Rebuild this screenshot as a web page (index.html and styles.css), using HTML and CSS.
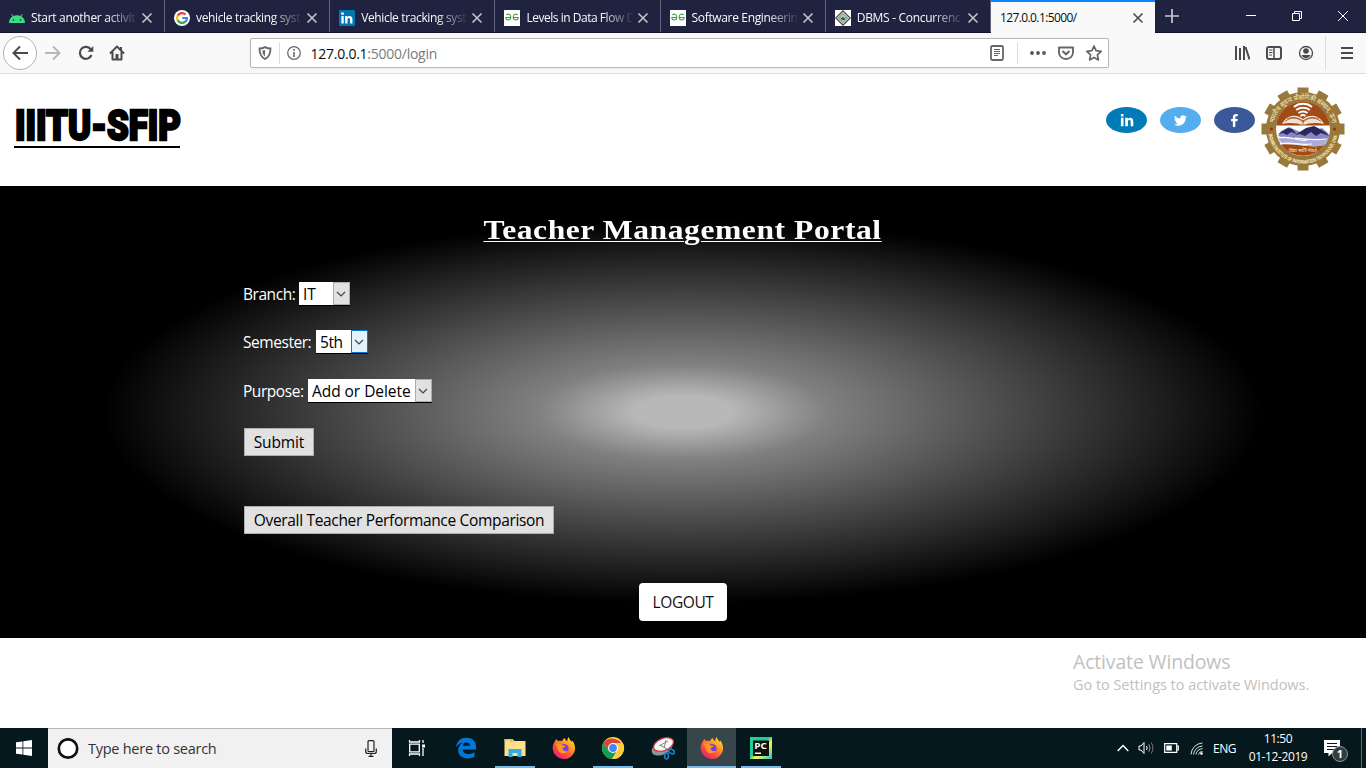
FILE: index.html
```html
<!DOCTYPE html>
<html lang="en">
<head>
<meta charset="utf-8">
<title>127.0.0.1:5000/</title>
<link rel="stylesheet" href="styles.css">
</head>
<body>
<svg class="defs" width="0" height="0">
  <defs>
    <linearGradient id="flame" x1="1" y1="0" x2="0.2" y2="1"><stop offset="0" stop-color="#fff44f"/><stop offset=".35" stop-color="#ffa41f"/><stop offset=".7" stop-color="#ff4a3c"/><stop offset="1" stop-color="#e31587"/></linearGradient>
    <linearGradient id="pc" x1="0" y1="0" x2="1" y2="1"><stop offset="0" stop-color="#21d789"/><stop offset=".45" stop-color="#21c8a0"/><stop offset=".6" stop-color="#fcf84a"/><stop offset="1" stop-color="#19c5e0"/></linearGradient>
    <symbol id="firefox" viewBox="0 0 24 24">
      <path fill="url(#flame)" d="M3 5c.6-1 1-1.600 1.700-2 .2 1 .8 1.600 1.600 2 1.200-.2 2.500-.2 3.700.2.5-1.700 1.600-2.700 3-3.200-.1 1.500 1 2.300 2.200 3.200.4-1.700.4-2.800 1.200-4.200 1 2 2.300 3.500 3.400 5 .2-.5.2-1 .5-1.500 2.300 3 3.200 6 2.600 10A11.300 11.300 0 0 1 .7 13C.5 10 1.300 7.500 3 5z"/>
      <circle cx="12" cy="12.500" r="4.600" fill="#7a3fe0"/>
      <path fill="#ff9a1e" d="M3.500 8c3-1 5.500 0 7 1.500l3 .2c-.3 1.500-1.600 2-3 2.300 0 2.500 2.500 4 5.500 2.800-2 3.500-8 3.500-10-.8-.8-2-.5-4-2.500-6z"/>
    </symbol>
    <symbol id="close" viewBox="0 0 12 12"><path d="M1.500 1.500l9 9m0-9l-9 9" fill="none" stroke="currentColor" stroke-width="1.600"/></symbol>
    <symbol id="gfg" viewBox="0 0 16 16"><rect width="16" height="16" fill="#fff"/><path d="M2.300 4.800C5 3.200 6.800 4.500 6.800 7S5.800 10 4.300 10 1.800 9 1.800 7.500h5M13.700 4.800C11 3.200 9.200 4.500 9.200 7s1 3 2.500 3 2.500-1 2.500-2.500h-5" fill="none" stroke="#43a047" stroke-width="1.100"/></symbol>
    <symbol id="chev" viewBox="0 0 10 6"><path d="M1 1l4 4 4-4" fill="none" stroke="currentColor" stroke-width="1.200"/></symbol>
  </defs>
</svg>

<header class="tabs">
  <div class="tab"><svg class="fav" viewBox="0 0 16 16"><path fill="#3ddc84" d="M0 13a8 8 0 0 1 3.500-6.500L2.200 4.300l.7-.4L4.300 6.100a9 9 0 0 1 7.400 0l1.400-2.200.7.400-1.300 2.200A8 8 0 0 1 16 13z"/><circle cx="4.500" cy="10" r=".8" fill="#20233f"/><circle cx="11.500" cy="10" r=".8" fill="#20233f"/></svg><span class="t t1">Start another activit</span><svg class="x"><use href="#close"/></svg></div>
  <div class="tab"><svg class="fav" viewBox="0 0 16 16"><circle cx="8" cy="8" r="8" fill="#fff"/><g fill="none" stroke-width="2.200"><path stroke="#ea4335" d="M11.500 4.500A5 5 0 0 0 3.600 5.700"/><path stroke="#fbbc05" d="M3.700 5.500a5 5 0 0 0 0 5"/><path stroke="#34a853" d="M3.600 10.300a5 5 0 0 0 7.700 1.400"/><path stroke="#4285f4" d="M11.200 11.800A5 5 0 0 0 13 8H8.200"/></g></svg><span class="t t2">vehicle tracking syst</span><svg class="x"><use href="#close"/></svg></div>
  <div class="tab"><svg class="fav" viewBox="0 0 16 16"><rect width="16" height="16" rx="1" fill="#0077b5"/><path fill="#fff" d="M2.400 6h2.300v7.500H2.400zM2.200 2.500h2.600v2.300H2.200zM6.200 6h2.200v1c1.200-1.800 5-1.600 5 2v4.500h-2.300v-4c0-2.200-2.600-2-2.600 0v4H6.200z"/></svg><span class="t t3">Vehicle tracking syst</span><svg class="x"><use href="#close"/></svg></div>
  <div class="tab"><svg class="fav"><use href="#gfg"/></svg><span class="t t4">Levels in Data Flow D</span><svg class="x"><use href="#close"/></svg></div>
  <div class="tab"><svg class="fav"><use href="#gfg"/></svg><span class="t t5">Software Engineerin</span><svg class="x"><use href="#close"/></svg></div>
  <div class="tab"><svg class="fav" viewBox="0 0 16 16"><rect width="16" height="16" fill="#fff"/><path d="M8 .8L15.200 8 8 15.200.8 8z" fill="#dde3dd" stroke="#444" stroke-width="1.200"/><path d="M8 3.500L12.500 8 8 12.500 3.500 8z" fill="#b9d1bf" stroke="#555" stroke-width=".7"/><path d="M5 6.500l1.500 3.500h3L11 6.500l-1.500 1.800L8 6.500 6.500 8.300z" fill="#286a42"/></svg><span class="t t6">DBMS - Concurrenc</span><svg class="x"><use href="#close"/></svg></div>
  <div class="tab active"><span class="t t7">127.0.0.1:5000/</span><svg class="x"><use href="#close"/></svg></div>
  <svg class="plus" viewBox="0 0 14 14"><path d="M7 0v14M0 7h14" stroke="#c9c9d2" stroke-width="1.700"/></svg>
  <div class="winctl">
    <svg width="12" height="12" viewBox="0 0 12 12"><path d="M1 5.500h10" stroke="#fff"/></svg>
    <svg width="12" height="12" viewBox="0 0 12 12" fill="none" stroke="#fff"><path d="M1.500 3.500h7v7h-7zM3.500 3.500v-2h7v7h-2"/></svg>
    <svg width="12" height="12" viewBox="0 0 12 12" fill="none" stroke="#fff"><path d="M1 1l10 10M11 1L1 11"/></svg>
  </div>
</header>

<nav class="toolbar">
  <div class="navbtns">
    <span class="back"><svg width="18" height="16" viewBox="0 0 18 16" fill="none" stroke="#4a4a4f" stroke-width="2"><path d="M9 1.500L2.500 8 9 14.500M2.500 8H17"/></svg></span>
    <svg width="18" height="16" viewBox="0 0 18 16" fill="none" stroke="#b8b8ba" stroke-width="2"><path d="M9 1.500L15.500 8 9 14.500M15.500 8H1"/></svg>
    <svg width="16" height="16" viewBox="0 0 16 16" fill="none" stroke="#4a4a4f" stroke-width="2.200"><path d="M13.500 10A6 6 0 1 1 13 4.600"/><path d="M9.500 6.800h5.800V1z" fill="#4a4a4f" stroke="none"/></svg>
    <svg width="16" height="16" viewBox="0 0 16 16"><path d="M1 8.500L8 1.500l7 7M3.500 7v7.500h9V7" fill="none" stroke="#4a4a4f" stroke-width="2" stroke-linejoin="round"/><path d="M6.500 9h3v5h-3z" fill="#4a4a4f"/><path d="M11 2h2v3h-2z" fill="#4a4a4f"/></svg>
  </div>
  <div class="urlbar">
    <svg width="14" height="14" viewBox="0 0 14 14"><path d="M1.500 2.500C4 2.500 5.500 1.900 7 1.100c1.500.8 3 1.400 5.500 1.400C12.500 8 11 11 7 13 3 11 1.500 8 1.500 2.500z" fill="none" stroke="#666" stroke-width="1.800"/><path d="M7 4v6.500C5 9 4.500 7 4.500 4.500z" fill="#666"/></svg>
    <i></i>
    <svg class="info" width="14" height="14" viewBox="0 0 14 14"><circle cx="7" cy="7" r="6.300" fill="none" stroke="#666" stroke-width="1.200"/><path d="M7 3v1.800M7 6v5" stroke="#666" stroke-width="1.600"/></svg>
    <span class="url"><b>127.0.0.1</b>:5000/login</span>
    <svg class="reader" width="14" height="16" viewBox="0 0 14 16" fill="none" stroke="#666"><rect x="1" y="1" width="12" height="14" rx="1.500" stroke-width="1.800"/><path d="M4 4.500h6M4 6.500h6M4 8.500h6M4 10.500h4"/></svg>
    <i class="sep2"></i>
    <svg class="dots" width="16" height="4" viewBox="0 0 16 4" fill="#555"><circle cx="2" cy="2" r="1.900"/><circle cx="8" cy="2" r="1.900"/><circle cx="14" cy="2" r="1.900"/></svg>
    <svg class="pocket" width="16" height="14" viewBox="0 0 16 14" fill="none" stroke="#666" stroke-width="1.900"><path d="M1 1.500h14v5a7 6.500 0 0 1-14 0z" stroke-linejoin="round"/><path d="M4.500 5L8 8.300 11.500 5" stroke-width="2"/></svg>
    <svg class="star" width="16" height="16" viewBox="0 0 16 16"><path d="M8 1l2.100 4.700 5.100.6-3.800 3.500 1 5.100L8 12.400l-4.400 2.500 1-5.100L.8 6.300l5.100-.6z" fill="none" stroke="#666" stroke-width="1.700" stroke-linejoin="round"/></svg>
  </div>
  <div class="tools">
    <svg width="16" height="14" viewBox="0 0 16 14" stroke="#4a4a4f" stroke-width="2" fill="none"><path d="M2 0v14M6 2v12M10 0v14"/><path d="M11.500 1l4 12.500"/></svg>
    <svg width="16" height="14" viewBox="0 0 16 14" stroke="#4a4a4f" fill="none"><rect x="1" y="1" width="14" height="12" rx="2" stroke-width="2"/><path d="M8 1v12" stroke-width="1.500"/><path d="M3 4h3.500M3 6.500h3.500M3 9h3"/></svg>
    <svg width="16" height="16" viewBox="0 0 16 16"><circle cx="8" cy="8" r="6.500" fill="none" stroke="#4a4a4f" stroke-width="1.300"/><circle cx="8" cy="6" r="2.800" fill="#4a4a4f"/><path d="M3.500 10h9c-1 2.500-3 3-4.500 3s-3.500-.5-4.500-3z" fill="#4a4a4f"/></svg>
    <i></i>
    <svg width="12" height="12" viewBox="0 0 12 12" stroke="#4a4a4f" stroke-width="2"><path d="M0 1h12M0 6h12M0 11h12"/></svg>
  </div>
</nav>

<section class="brand">
  <svg class="logo" width="180" height="56" viewBox="0 0 180 56"><text x="1" y="40" textLength="166" lengthAdjust="spacingAndGlyphs">IIITU-SFIP</text><path d="M0 46h166v2H0z"/></svg>
  <div class="social">
    <a class="in"><svg width="14" height="14" viewBox="0 0 16 16" fill="#fff"><path d="M1 5.500h3V15H1zM1 1.200h3v2.900H1zM6 5.500h2.900v1.300c1.600-2.500 6.300-2 6.300 2.500V15h-3V10c0-3-3.200-2.700-3.200 0v5H6z"/></svg></a>
    <a class="tw"><svg width="13" height="13" viewBox="0 0 24 24" fill="#fff"><path d="M23.900 4.600a10 10 0 0 1-2.800.8 4.900 4.900 0 0 0 2.100-2.700c-1 .6-2 1-3.100 1.200a4.900 4.900 0 0 0-8.400 4.500A14 14 0 0 1 1.600 3.200a4.900 4.900 0 0 0 1.500 6.500 5 5 0 0 1-2.200-.6 4.900 4.900 0 0 0 4 4.900 5 5 0 0 1-2.300.1 4.900 4.900 0 0 0 4.600 3.400A9.900 9.900 0 0 1 0 19.500 14 14 0 0 0 21.500 7.100c1-.7 1.800-1.600 2.400-2.500z"/></svg></a>
    <a class="fb"><svg width="13" height="13" viewBox="0 0 16 16" fill="#fff"><path d="M6 16V9H3.800V6H6V4c0-3 2-4.300 6-3.800v2.600h-1.500C9.300 2.800 9 3.300 9 4.200V6h3l-.5 3H9v7z"/></svg></a>
  </div>
  <svg class="emblem" width="84" height="84" viewBox="-42 -42 84 84">
    <g fill="#98783b"><circle r="37"/><g id="teeth"><path d="M-5.500-41.500h11v83h-11z"/><path d="M-41.500-5.500v11h83v-11z"/></g><use href="#teeth" transform="rotate(30)"/><use href="#teeth" transform="rotate(60)"/></g>
    <circle r="27" fill="#fff"/>
    <path d="M-26.800-3.500a27 27 0 0 1 53.600 0z" fill="#a14a16"/>
    <path d="M-22 15.500a27 27 0 0 0 44 0C8 20-7 14-22 15.500z" fill="#a14a16"/>
    <path d="M-25 7l3-5 8-4 9 4 5 2 8-5 6 2 5-2 6 5 2 4-8 4-20 2z" fill="#8688bf"/>
    <path d="M-25 5l10-6 4 1 5 5-6-2-4 3-4-2zM-8 6L3-1l8-2 6 3 5 3 4 4-8-3-5 3-5-4-6 4-5-2z" fill="#29275d"/>
    <path d="M-25.500 9c12-4 18 4 29 2 8-2 14-1 22-2l-4 7c-11 4-23-2-42-1z" fill="#aaaedd"/>
    <path d="M-25 9c14-3 20 4 29 2m-27 4c12-3 16 2 32 0M-8 9c12 1 18 3 31 1" fill="none" stroke="#fff" stroke-width="1.200"/>
    <path d="M-21-5c5-10 15-10 21-5 6-5 16-5 21 5C14-7 6-6 0-4c-6-2-14-3-21-1z" fill="#f4e0d0"/>
    <path d="M-18-7.500c6-5 13-4 18 .5 5-4.500 12-5.500 18-.5M-16-10c6-3 12-1 16 2 4-3 10-5 16-2M0-9v5" fill="none" stroke="#8f3c11" stroke-width=".7"/>
    <g fill="none" stroke="#fff" stroke-width="2"><path d="M-9-22c5-4.300 13-4.300 18 0M-6.800-19c4-3 9.600-3 13.600 0M-4.600-16c3-2 6.200-2 9.200 0M-2.500-13.200c1.500-1 3.500-1 5 0"/></g>
    <circle cx="-31.500" r="1.500" fill="#a32b12"/><circle cx="31.500" r="1.500" fill="#a32b12"/>
    <defs><path id="up" d="M-29-6a29.600 29.600 0 0 1 58 0"/><path id="down" d="M-34.500 5a34.900 34.900 0 0 0 69 0"/></defs>
    <text class="hi"><textPath href="#up" textLength="81" lengthAdjust="spacingAndGlyphs">भारतीय सूचना प्रौद्योगिकी संस्थान, ऊना</textPath></text>
    <text class="en"><textPath href="#down" textLength="97" lengthAdjust="spacingAndGlyphs">INDIAN INSTITUTE OF INFORMATION TECHNOLOGY, UNA</textPath></text>
    <text class="mo" x="-14" y="22.500" textLength="28" lengthAdjust="spacingAndGlyphs">विद्या सर्वत्र गीयते</text>
  </svg>
</section>

<main class="portal">
  <h1>Teacher Management Portal</h1>
  <form>
    <div class="row r1"><label>Branch:</label><span class="select s1"><span>IT</span><em><svg><use href="#chev"/></svg></em></span></div>
    <div class="row r2"><label>Semester:</label><span class="select s2"><span>5th</span><em class="hover"><svg><use href="#chev"/></svg></em></span></div>
    <div class="row r3"><label>Purpose:</label><span class="select s3"><span>Add or Delete</span><em><svg><use href="#chev"/></svg></em></span></div>
    <button type="button" class="btn submit">Submit</button>
    <button type="button" class="btn overall">Overall Teacher Performance Comparison</button>
  </form>
  <button type="button" class="logout">LOGOUT</button>
</main>

<section class="below">
  <div class="activate"><p class="a1">Activate Windows</p><p class="a2">Go to Settings to activate Windows.</p></div>
</section>

<footer class="taskbar">
  <div class="start"><svg width="16" height="16" viewBox="0 0 16 16" fill="#fff"><path d="M0 2.300L6.500 1.400v6.200H0zM7.300 1.300L16 0v7.600H7.300zM0 8.400h6.500v6.200L0 13.700zM7.300 8.400H16V16l-8.700-1.300z"/></svg></div>
  <div class="search">
    <svg width="22" height="22" viewBox="0 0 22 22"><circle cx="11" cy="10.500" r="9.200" fill="#fff" stroke="#111" stroke-width="2.700"/></svg>
    <span>Type here to search</span>
    <svg width="12" height="17" viewBox="0 0 12 17" fill="none" stroke="#222" stroke-width="1.200"><rect x="3" y=".7" width="6" height="11" rx="1"/><path d="M.7 8.500v3q0 2 2 2h6.600q2 0 2-2v-3M6 13.500v3M3.500 16.300h5"/></svg>
  </div>
  <div class="apps">
    <span class="app"><svg width="18" height="16" viewBox="0 0 18 16" fill="none" stroke="#fff" stroke-width="1.300"><path d="M1.700 4.200h9.600v7.600H1.700zM1.500 0v2h10V0M1.500 16v-2h10v2M15 0v3M15 8v8"/><path d="M14 4.500h3v3h-3z" fill="#fff" stroke="none"/></svg></span>
    <span class="app"><svg width="22" height="22" viewBox="0 0 22 22" fill="#0078d7"><path d="M1 10C2 4 6 .8 11.500.8 18 .8 21 5 21 10v2.600H7.500c.3 5 7.500 5.700 12 2.700v4.500C12 23.500 3.200 20.600 3.200 13.600c0-4 2.300-6.800 5.300-8.100C5 6 2.500 7.800 1 10zm6.800-1.200h7c0-4.600-6.500-4.200-7 0z"/></svg></span>
    <span class="app open"><svg width="22" height="20" viewBox="0 0 22 20"><path d="M.5 1h8l2 2h11v15H.5z" fill="#ffe08a"/><path d="M.5 1h8l1 3h-9z" fill="#f0b93b"/><path d="M2 2.500h4v1H2z" fill="#fff"/><path d="M4.500 19v-8h13v8h-4v-4h-5v4z" fill="#33ace3"/></svg></span>
    <span class="app"><svg width="24" height="24"><use href="#firefox"/></svg></span>
    <span class="app open"><svg width="24" height="24" viewBox="0 0 24 24"><circle cx="12" cy="12" r="11" fill="#ffcd42"/><path d="M12 12H21.900A11 11 0 0 0 2.500 6.500L7 14.500z" fill="#db4437"/><path d="M2.500 6.500A11 11 0 0 0 11 23l5-8.500h-9z" fill="#0f9d58"/><path d="M12 7h9.800A11 11 0 0 1 11 23l5.500-9z" fill="#ffcd42"/><circle cx="12" cy="12" r="5" fill="#fff"/><circle cx="12" cy="12" r="3.900" fill="#4285f4"/></svg></span>
    <span class="app"><svg width="24" height="24" viewBox="0 0 24 24"><ellipse cx="11" cy="12" rx="11" ry="6.500" transform="rotate(-25 11 12)" fill="#8e9498"/><ellipse cx="12.500" cy="8.500" rx="10.500" ry="6" transform="rotate(-22 12.500 8.500)" fill="#f8f8f8" stroke="#d2393b" stroke-width="1.300"/><path d="M8 10l9-5M15 4l-2 8M9 9l7 4" stroke="#888" fill="none"/><g fill="none" stroke="#1380c5" stroke-width="1.700"><ellipse cx="20.500" cy="15.500" rx="3" ry="2" transform="rotate(25 20.500 15.500)"/><ellipse cx="15.500" cy="20" rx="1.900" ry="3"/></g></svg></span>
    <span class="app open current"><svg width="24" height="24"><use href="#firefox"/></svg></span>
    <span class="app open"><svg width="22" height="22" viewBox="0 0 22 22"><path d="M0 0h22v22H0z" fill="url(#pc)"/><path d="M3 3.500h16V19H3z" fill="#111"/><text x="4.200" y="11.500" class="pctext" textLength="12.500" lengthAdjust="spacingAndGlyphs">PC</text><path d="M5 15.500h6V17H5z" fill="#fff"/></svg></span>
  </div>
  <div class="tray">
    <svg class="up" width="12" height="8" viewBox="0 0 12 8" fill="none" stroke="#fff" stroke-width="1.400"><path d="M.7 7L6 1.500 11.300 7"/></svg>
    <svg class="vol" width="17" height="14" viewBox="0 0 17 14" fill="none" stroke="#fff"><path d="M1 5h2l3-3.500v11L3 9H1z"/><path d="M8.500 5q1.300 2 0 4"/><path d="M10.800 3.300q2.500 3.700 0 7.400" stroke="#999"/><path d="M13.200 1.500q3.500 5.500 0 11" stroke="#777"/></svg>
    <svg class="bat" width="15" height="10" viewBox="0 0 15 10"><path d="M.7.700h12v8.600H.7zM13 3h1.300v4H13" fill="none" stroke="#fff" stroke-width="1.200"/><path d="M2.300 2.500h5.500v5H2.300z" fill="#fff"/></svg>
    <svg class="wifi" width="13" height="13" viewBox="0 0 13 13" fill="none" stroke="#ddd"><path d="M1 12.500A12 12 0 0 1 12.500 1M3.500 12.500A9.500 9.500 0 0 1 12.500 4M6 12.500a6.500 6.500 0 0 1 6.500-5.800M8.500 12.500a4 4 0 0 1 4-3"/><circle cx="11.500" cy="11.500" r="1" fill="#fff"/></svg>
    <span class="lang">ENG</span>
    <div class="clock"><span>11:50</span><span>01-12-2019</span></div>
    <div class="note"><svg width="17" height="17" viewBox="0 0 17 17"><path d="M0 0h16v13H8l-3.500 3.500V13H0z" fill="#fff"/><path d="M3 3.500h10M3 6.500h10M3 9.500h7" stroke="#05181d"/></svg><b>1</b></div>
    <i></i>
  </div>
</footer>
</body>
</html>
```
FILE: styles.css
```css
* { box-sizing: border-box; }
body { margin: 0; width: 1366px; height: 768px; overflow: hidden; display: flex; flex-direction: column; background: #fff; font-family: "Open Sans", "Noto Sans", sans-serif; color: #000; }
svg { display: block; flex: none; }
.defs { position: absolute; }
p, h1 { margin: 0; }

.tabs { height: 33px; flex: none; display: flex; background: #20233f; border-bottom: 1px solid #12142b; }
.tab { width: 165.200px; flex: none; display: flex; align-items: center; padding: 3px 11px 0 9px; border-right: 1px solid #62647a; color: #f9f9fa; font-size: 12px; }
.tab:first-child { width: 165px; }
.fav { width: 16px; height: 16px; margin-right: 6px; }
.t { flex: 1; min-width: 0; white-space: nowrap; line-height: 18px; -webkit-mask-image: linear-gradient(to right, #000 72%, transparent 102%); mask-image: linear-gradient(to right, #000 72%, transparent 102%); }
.t1 { letter-spacing: -.3px; }
.t2 { letter-spacing: -.35px; }
.t3 { letter-spacing: -.36px; }
.t4 { letter-spacing: -.47px; }
.t5 { letter-spacing: -.34px; }
.t6 { letter-spacing: -.3px; }
.x { width: 12px; height: 12px; margin-left: 5px; color: #c3c3cd; }
.tab.active { height: 33px; width: 164px; background: #f9f9fa; color: #0c0c0d; border-right: 0; border-top: 2px solid #0a84ff; padding: 0 11px 0 9px; }
.active .x { color: #4a4a4f; }
.active .t { -webkit-mask: none; mask: none; letter-spacing: -.6px; }
.plus { width: 14px; height: 14px; margin: 9px 0 0 10px; }
.winctl { margin-left: auto; display: flex; gap: 34px; padding: 10px 17px 0 0; }

.toolbar { height: 41px; flex: none; display: flex; align-items: center; background: #f9f9fa; border-bottom: 1px solid #dcdcde; }
.navbtns { width: 250px; display: flex; align-items: center; padding-left: 3px; }
.back { width: 34px; height: 34px; border: 1px solid #b1b1b3; border-radius: 50%; background: #fff; display: flex; align-items: center; justify-content: center; margin-right: 7px; }
.navbtns > svg { margin-right: 15.500px; }
.urlbar { width: 859px; height: 30px; border: 1px solid #b8b8ba; background: #fff; border-radius: 2px; display: flex; align-items: center; padding-left: 7px; box-shadow: 0 1px 3px rgba(0,0,0,.06); }
.urlbar i { width: 1px; height: 22px; background: #dcdcde; margin-left: 7px; }
.info { margin-left: 7px; }
.url { margin-left: 9.500px; font-size: 14px; color: #7b7b7e; flex: 1; letter-spacing: -.25px; padding-top: 1px; }
.url b { font-weight: 400; color: #0c0c0d; }
.urlbar .sep2 { margin-left: 13px; }
.dots { margin-left: 12px; }
.pocket { margin-left: 12px; }
.star { margin: 0 6px 0 12px; }
.tools { margin-left: auto; display: flex; align-items: center; padding-right: 13px; gap: 16px; }
.tools i { width: 1px; height: 34px; background: #dcdcde; margin: 0 -1px 0 -5px; }

.brand { height: 112px; flex: none; display: flex; align-items: flex-start; padding: 0 21px 0 14px; }
.logo { margin-top: 26px; overflow: visible; }
.logo text { font: 900 42px Roboto, sans-serif; stroke: #000; stroke-width: 2.400px; }
.social { margin: 33px 6px 0 auto; display: flex; gap: 13px; }
.social a { width: 41px; height: 26px; border-radius: 50%; display: flex; align-items: center; justify-content: center; }
.in { background: #007bb5; }
.tw { background: #55acee; }
.fb { background: #3b5998; }
.emblem { margin-top: 12.500px; }
.emblem text { fill: #fff3c8; font-family: "Noto Sans", sans-serif; }
.emblem .hi { font-size: 7px; }
.emblem .en { font-size: 5px; font-weight: 700; }
.emblem .mo { font-size: 5px; }

.portal { height: 452px; flex: none; display: flex; flex-direction: column; background: radial-gradient(#b8b8b8 5%, #808080 15%, #000 60%); }
h1 { align-self: center; margin-top: 26px; height: 36px; color: #fff; font: 700 28px/36px "Liberation Serif", serif; letter-spacing: .5px; transform: scaleX(1.128); text-decoration: underline; text-decoration-thickness: 1px; text-underline-offset: 2px; white-space: nowrap; }
form { margin: 34px 0 0 243px; display: flex; flex-direction: column; align-items: flex-start; font-size: 15.500px; }
.row { display: flex; height: 24px; line-height: 25px; color: #fff; margin-bottom: 24px; white-space: nowrap; }
.row label { letter-spacing: -.45px; }
.r1 label { width: 56px; }
.r2 label { width: 73px; }
.r3 label { width: 65px; }
.r2 { margin-bottom: 25px; }
.select { display: flex; height: 24px; border-bottom: 1px solid #000; background: #fff; color: #000; }
.select > span { flex: 1; padding-left: 4px; letter-spacing: -.05px; }
.s2 > span { letter-spacing: -.4px; }
.select em { width: 17px; background: #e1e1e1; border: 1px solid #adadad; color: #444; display: flex; align-items: center; padding-left: 2px; }
.select em.hover { background: #e5f1fb; border-color: #0078d7; }
.select em svg { width: 10px; height: 6px; }
.s1 { width: 51px; }
.s2 { width: 52px; }
.s3 { width: 124px; }
.btn { height: 28px; background: #e1e1e1; border: 1px solid #adadad; padding: 0; color: #000; font: 15.500px/25px "Open Sans", sans-serif; margin-left: 1px; white-space: nowrap; letter-spacing: -.13px; }
.submit { width: 70px; margin-top: 1px; }
.overall { width: 310px; margin-top: 50px; letter-spacing: -.33px; }
.logout { align-self: center; margin-top: 49px; width: 88px; height: 38px; background: #fff; border: 0; border-radius: 4px; color: #111; padding: 0; font: 15.500px "Open Sans", sans-serif; letter-spacing: -.4px; }

.below { height: 90px; flex: none; display: flex; }
.activate { margin: 10px 0 0 1073px; color: #c1c1c1; white-space: nowrap; }
.a1 { font-size: 19.500px; line-height: 28px; letter-spacing: -.17px; }
.a2 { font-size: 14.500px; line-height: 18px; letter-spacing: -.04px; }

.taskbar { height: 40px; flex: none; display: flex; background: #05181d; color: #fff; }
.start { width: 48px; display: flex; align-items: center; justify-content: center; }
.search { width: 344px; background: #f1f1f1; border-top: 1px solid #b5b5b5; display: flex; align-items: center; padding: 0 15px 0 9px; color: #333; font-size: 14.500px; letter-spacing: -.26px; }
.search span { flex: 1; margin-left: 9px; }
.apps { display: flex; }
.app { width: 49.200px; height: 40px; display: flex; align-items: center; justify-content: center; }
.apps .open { background: linear-gradient(#76b9ed, #76b9ed) center bottom / 40px 2px no-repeat; }
.apps .current { background: linear-gradient(#76b9ed, #76b9ed) center bottom / 49px 2px no-repeat, #36464a; }
.pctext { font: 700 9px "Open Sans", sans-serif; fill: #fff; }
.tray { margin-left: auto; display: flex; align-items: center; font-size: 12px; }
.vol { margin-left: 9px; }
.bat { margin-left: 9px; }
.wifi { margin-left: 11px; }
.lang { margin-left: 10px; width: 24px; letter-spacing: -.5px; }
.clock { margin-left: 11px; width: 60px; display: flex; flex-direction: column; align-items: center; line-height: 18px; letter-spacing: -.4px; white-space: nowrap; }
.note { position: relative; margin-left: 16px; width: 24px; height: 17px; }
.note b { position: absolute; left: 8px; top: 6px; width: 16px; height: 16px; border-radius: 50%; background: #333c40; border: 1px solid #8c9294; font-size: 11px; line-height: 14px; text-align: center; }
.tray i { width: 1px; height: 40px; background: #61706f; margin: 0 4px 0 13px; }
```
